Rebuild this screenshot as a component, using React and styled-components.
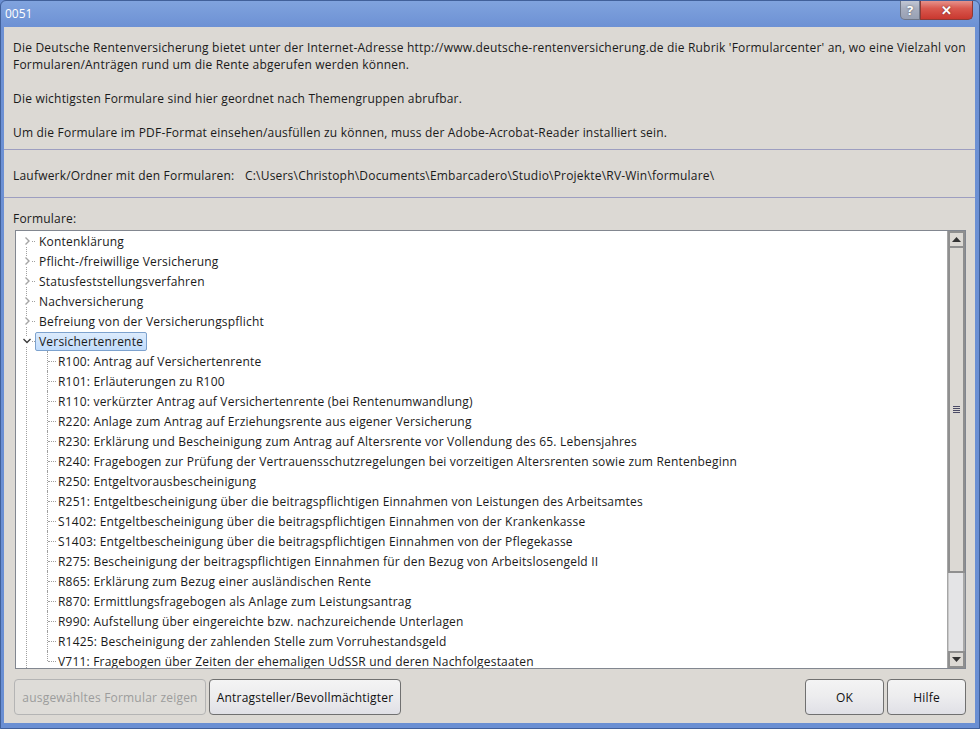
import styled, { createGlobalStyle } from "styled-components";

const GlobalStyle = createGlobalStyle`
  html, body { margin: 0; padding: 0; background: #6a8fd3; }
  body {
    font-family: "Open Sans", "Noto Sans", sans-serif;
    font-size: 12px;
    letter-spacing: 0.2px;
    color: #1a1a1a;
  }
`;

const Window = styled.div`
  width: 980px;
  height: 729px;
  box-sizing: border-box;
  display: flex;
  flex-direction: column;
  background: linear-gradient(#80a3de, #6d91d4 26px, #6a8fd3);
  border: 1px solid #41609a;
  border-radius: 6px 6px 0 0;
  padding: 0 4px 5px 3px;
  overflow: hidden;
`;

const TitleBar = styled.div`
  height: 26px;
  flex: none;
  display: flex;
  justify-content: space-between;
  align-items: flex-start;
`;

const Title = styled.div`
  color: #fff;
  font-size: 12px;
  letter-spacing: 0;
  line-height: 26px;
  padding-left: 1px;
`;

const CaptionButtons = styled.div`
  display: flex;
  margin: -1px 2px 0 0;
`;

const CaptionButton = styled.div`
  height: 20px;
  width: ${(p) => (p.$close ? "53px" : "20px")};
  box-sizing: border-box;
  display: flex;
  align-items: center;
  justify-content: center;
  color: #fff;
  font-weight: bold;
  font-size: 13px;
  letter-spacing: 0;
  border: 1px solid ${(p) => (p.$close ? "#8d3a35" : "#6f7789")};
  border-top: none;
  border-radius: ${(p) => (p.$close ? "0 0 5px 0" : "0 0 0 5px")};
  background: ${(p) =>
    p.$close
      ? "linear-gradient(#e89a93, #d9584e 45%, #c9382f)"
      : "linear-gradient(#c5cad6, #a7aebf 45%, #98a0b3)"};
  text-shadow: 0 0 2px rgba(0, 0, 0, 0.5);
`;

const Client = styled.div`
  flex: 1;
  display: flex;
  flex-direction: column;
  background: #dcd9d4;
  min-height: 0;
`;

const Intro = styled.div`
  display: flex;
  flex-direction: column;
  gap: 17px;
  padding: 12px 9px 0 9px;
`;

const Para = styled.p`
  margin: 0;
  line-height: 17px;
  white-space: nowrap;
`;

const Divider = styled.div`
  height: 1px;
  background: #9d9ec0;
  margin-top: ${(p) => p.$top}px;
`;

const PathRow = styled.div`
  display: flex;
  padding: 17px 9px 0 9px;
  line-height: 17px;
  white-space: nowrap;
`;

const PathLabel = styled.span`
  width: 232px;
  flex: none;
`;

const Caption = styled.div`
  padding: 12px 9px 0 9px;
  line-height: 17px;
`;

const TreeBox = styled.div`
  flex: 1;
  min-height: 0;
  margin: 3px 9px 0 11px;
  border: 1px solid #828790;
  background: #fff;
  display: flex;
`;

const TreeList = styled.div`
  flex: 1;
  position: relative;
  overflow: hidden;
  &::before {
    content: "";
    position: absolute;
    left: 10px;
    top: 10px;
    bottom: 0;
    border-left: 1px dotted #a0a0a0;
  }
`;

const Row = styled.div`
  position: relative;
  height: 20px;
  display: flex;
  align-items: center;
  white-space: nowrap;
  padding-left: ${(p) => (p.$child ? 38 : 0)}px;
  ${(p) =>
    p.$child &&
    `
    &::before {
      content: "";
      position: absolute;
      left: 31px;
      top: 0;
      height: ${p.$last ? "10px" : "20px"};
      border-left: 1px dotted #a0a0a0;
    }
    &::after {
      content: "";
      position: absolute;
      left: 32px;
      top: 10px;
      width: 8px;
      border-top: 1px dotted #a0a0a0;
    }
  `}
`;

const Expander = styled.div`
  position: relative;
  width: 19px;
  height: 20px;
  flex: none;
  &::after {
    content: "";
    position: absolute;
    left: 13px;
    top: 10px;
    width: 6px;
    border-top: 1px dotted #a0a0a0;
  }
`;

const Chevron = styled.svg`
  position: absolute;
  left: 6px;
  top: 5px;
  width: 10px;
  height: 10px;
  background: #fff;
  z-index: 1;
`;

const Label = styled.span`
  display: inline-flex;
  align-items: center;
  height: 19px;
  box-sizing: border-box;
  padding: 0 3px;
  border: 1px solid ${(p) => (p.$selected ? "#7da2ce" : "transparent")};
  border-radius: 2px;
  background: ${(p) => (p.$selected ? "linear-gradient(#dcebfc, #c1dcfc)" : "transparent")};
  position: relative;
  z-index: 1;
`;

const ScrollBar = styled.div`
  width: 17px;
  flex: none;
  display: flex;
  flex-direction: column;
  background: #e4e4e6;
  border-left: 1px solid #a6a6a6;
`;

const ArrowButton = styled.div`
  height: 17px;
  flex: none;
  box-sizing: border-box;
  border: 2px solid #8f8f8f;
  background: #dcd9d4;
  display: flex;
  align-items: center;
  justify-content: center;
`;

const Thumb = styled.div`
  height: 325px;
  flex: none;
  box-sizing: border-box;
  border: 2px solid #8f8f8f;
  border-top: none;
  background: #dcd9d4;
  display: flex;
  flex-direction: column;
  align-items: center;
  justify-content: center;
  gap: 1px;
`;

const GripLine = styled.div`
  width: 7px;
  height: 1px;
  background: #4b4b66;
`;

const Track = styled.div`
  flex: 1;
  border-right: 2px solid #a9a9a9;
  border-left: 1px solid #c8c8c8;
`;

const ButtonRow = styled.div`
  display: flex;
  justify-content: space-between;
  padding: 10px 9px 8px 10px;
`;

const ButtonGroup = styled.div`
  display: flex;
  gap: 3px;
`;

const Button = styled.button`
  height: 36px;
  width: ${(p) => p.$w}px;
  box-sizing: border-box;
  font-family: inherit;
  font-size: 12px;
  letter-spacing: 0.2px;
  color: ${(p) => (p.disabled ? "#9c9c9c" : "#111")};
  border: 1px solid ${(p) => (p.disabled ? "#b4b4b4" : "#707070")};
  border-radius: 4px;
  background: ${(p) =>
    p.disabled ? "#dedcd8" : "linear-gradient(#f4f4f4, #ececee 50%, #e0e0e6)"};
  padding: 0;
`;

const groups = [
  "Kontenklärung",
  "Pflicht-/freiwillige Versicherung",
  "Statusfeststellungsverfahren",
  "Nachversicherung",
  "Befreiung von der Versicherungspflicht",
];

const forms = [
  "R100: Antrag auf Versichertenrente",
  "R101: Erläuterungen zu R100",
  "R110: verkürzter Antrag auf Versichertenrente (bei Rentenumwandlung)",
  "R220: Anlage zum Antrag auf Erziehungsrente aus eigener Versicherung",
  "R230: Erklärung und Bescheinigung zum Antrag auf Altersrente vor Vollendung des 65. Lebensjahres",
  "R240: Fragebogen zur Prüfung der Vertrauensschutzregelungen bei vorzeitigen Altersrenten sowie zum Rentenbeginn",
  "R250: Entgeltvorausbescheinigung",
  "R251: Entgeltbescheinigung über die beitragspflichtigen Einnahmen von Leistungen des Arbeitsamtes",
  "S1402: Entgeltbescheinigung über die beitragspflichtigen Einnahmen von der Krankenkasse",
  "S1403: Entgeltbescheinigung über die beitragspflichtigen Einnahmen von der Pflegekasse",
  "R275: Bescheinigung der beitragspflichtigen Einnahmen für den Bezug von Arbeitslosengeld II",
  "R865: Erklärung zum Bezug einer ausländischen Rente",
  "R870: Ermittlungsfragebogen als Anlage zum Leistungsantrag",
  "R990: Aufstellung über eingereichte bzw. nachzureichende Unterlagen",
  "R1425: Bescheinigung der zahlenden Stelle zum Vorruhestandsgeld",
  "V711: Fragebogen über Zeiten der ehemaligen UdSSR und deren Nachfolgestaaten",
];

function ChevronIcon({ open }) {
  return (
    <Chevron viewBox="0 0 10 10">
      {open ? (
        <path d="M1.5 3 L5 6.5 L8.5 3" fill="none" stroke="#3c3c3c" strokeWidth="1.4" />
      ) : (
        <path d="M3.5 1.5 L7 5 L3.5 8.5" fill="none" stroke="#a4a4a4" strokeWidth="1.4" />
      )}
    </Chevron>
  );
}

export default function App() {
  return (
    <>
      <GlobalStyle />
      <Window>
        <TitleBar>
          <Title>0051</Title>
          <CaptionButtons>
            <CaptionButton>?</CaptionButton>
            <CaptionButton $close>✕</CaptionButton>
          </CaptionButtons>
        </TitleBar>
        <Client>
          <Intro>
            <Para>
              Die Deutsche Rentenversicherung bietet unter der Internet-Adresse
              http://www.deutsche-rentenversicherung.de die Rubrik 'Formularcenter' an,
              wo eine Vielzahl von
              <br />
              Formularen/Anträgen rund um die Rente abgerufen werden können.
            </Para>
            <Para>Die wichtigsten Formulare sind hier geordnet nach Themengruppen abrufbar.</Para>
            <Para>
              Um die Formulare im PDF-Format einsehen/ausfüllen zu können, muss der
              Adobe-Acrobat-Reader installiert sein.
            </Para>
          </Intro>
          <Divider $top={8} />
          <PathRow>
            <PathLabel>Laufwerk/Ordner mit den Formularen:</PathLabel>
            <span>C:\Users\Christoph\Documents\Embarcadero\Studio\Projekte\RV-Win\formulare\</span>
          </PathRow>
          <Divider $top={13} />
          <Caption>Formulare:</Caption>
          <TreeBox>
            <TreeList>
              {groups.map((g) => (
                <Row key={g}>
                  <Expander>
                    <ChevronIcon />
                  </Expander>
                  <Label>{g}</Label>
                </Row>
              ))}
              <Row>
                <Expander>
                  <ChevronIcon open />
                </Expander>
                <Label $selected>Versichertenrente</Label>
              </Row>
              {forms.map((f, i) => (
                <Row key={f} $child $last={i === forms.length - 1}>
                  <Label>{f}</Label>
                </Row>
              ))}
            </TreeList>
            <ScrollBar>
              <ArrowButton>
                <svg width="9" height="5" viewBox="0 0 9 5">
                  <path d="M0 5 L4.5 0 L9 5 Z" fill="#333" />
                </svg>
              </ArrowButton>
              <Thumb>
                <GripLine />
                <GripLine />
                <GripLine />
                <GripLine />
              </Thumb>
              <Track />
              <ArrowButton>
                <svg width="9" height="5" viewBox="0 0 9 5">
                  <path d="M0 0 L9 0 L4.5 5 Z" fill="#333" />
                </svg>
              </ArrowButton>
            </ScrollBar>
          </TreeBox>
          <ButtonRow>
            <ButtonGroup>
              <Button disabled $w={192}>ausgewähltes Formular zeigen</Button>
              <Button $w={192}>Antragsteller/Bevollmächtigter</Button>
            </ButtonGroup>
            <ButtonGroup>
              <Button $w={79}>OK</Button>
              <Button $w={79}>Hilfe</Button>
            </ButtonGroup>
          </ButtonRow>
        </Client>
      </Window>
    </>
  );
}
